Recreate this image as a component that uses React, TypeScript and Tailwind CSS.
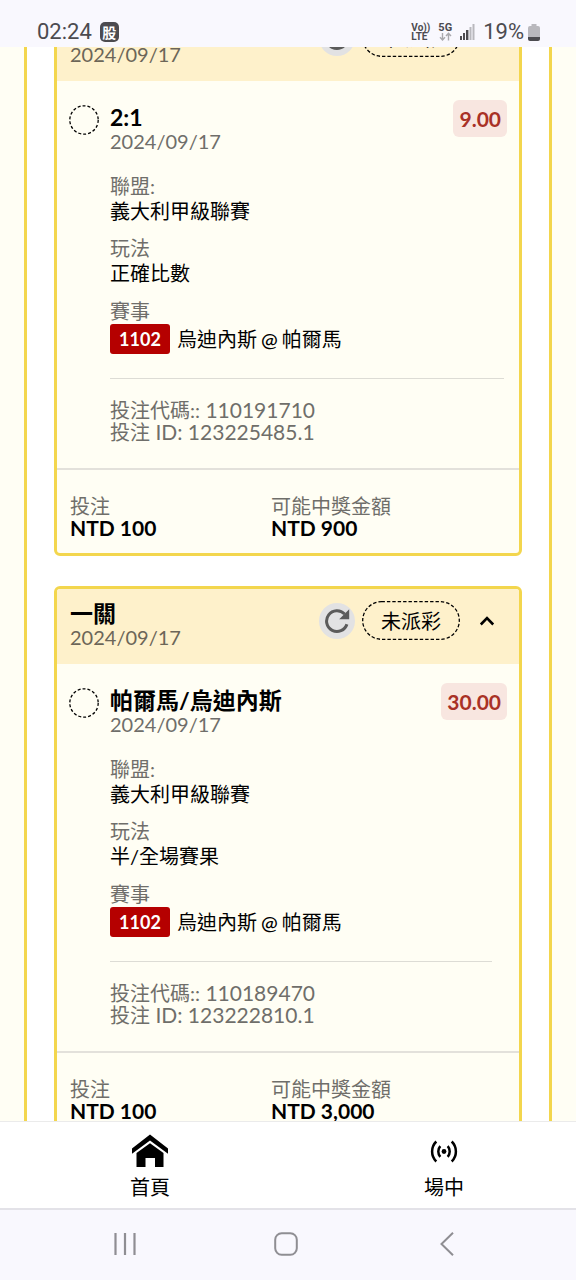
type Bet = {
  id: string;
  code: string;
  title: string;
  date: string;
  odds: string;
  league: string;
  market: string;
  matchNo: string;
  away: string;
  home: string;
  stake: string;
  payout: string;
};

const bets: Bet[] = [
  {
    id: "123225485.1",
    code: "110191710",
    title: "2:1",
    date: "2024/09/17",
    odds: "9.00",
    league: "義大利甲級聯賽",
    market: "正確比數",
    matchNo: "1102",
    away: "烏迪內斯",
    home: "帕爾馬",
    stake: "NTD 100",
    payout: "NTD 900",
  },
  {
    id: "123222810.1",
    code: "110189470",
    title: "帕爾馬/烏迪內斯",
    date: "2024/09/17",
    odds: "30.00",
    league: "義大利甲級聯賽",
    market: "半/全場賽果",
    matchNo: "1102",
    away: "烏迪內斯",
    home: "帕爾馬",
    stake: "NTD 100",
    payout: "NTD 3,000",
  },
];

const StatusBar = () => (
  <header className="flex h-[47px] shrink-0 items-end justify-between bg-[#f9f8fe] pr-9 pb-[3px] pl-[37px] font-['Roboto',sans-serif] text-[#4c4b50]">
    <div className="flex items-center gap-2">
      <span className="text-[22px] leading-6">02:24</span>
      <span className="flex h-5 w-[19px] items-center justify-center rounded-[5px] bg-[#4c4b50] font-['Noto_Sans_CJK_TC',sans-serif] text-[14px] leading-5 font-bold text-white">
        股
      </span>
    </div>
    <div className="flex items-center">
      <div className="flex flex-col text-[10px] leading-[9px] font-bold">
        <span>Vo))</span>
        <span>LTE</span>
      </div>
      <div className="ml-2 flex flex-col items-center text-[11px] leading-[9px] font-bold">
        <span>5G</span>
        <svg width="13" height="9" viewBox="0 0 13 9" fill="none" stroke="#aaa9ae" strokeWidth="1.4" aria-hidden="true">
          <path d="M3.5 1v7M1 5.3 3.5 8 6 5.3M9.5 8.500V1.500M7 4 9.500 1.300 12 4" />
        </svg>
      </div>
      <svg className="ml-2" width="15" height="16" viewBox="0 0 15 16" aria-hidden="true">
        <g fill="#4c4b50">
          <rect x="0" y="12" width="2" height="4" />
          <rect x="3" y="9" width="2" height="7" />
          <rect x="6" y="6" width="2.400" height="10" />
        </g>
        <g fill="#b9b8bd">
          <rect x="9.500" y="3" width="2" height="13" />
          <rect x="12.500" y="0" width="2" height="16" />
        </g>
      </svg>
      <span className="ml-2 text-[22px] leading-6">19%</span>
      <svg className="ml-1" width="12" height="17" viewBox="0 0 12 17" aria-hidden="true">
        <path d="M3.500 0h5v2H10a2 2 0 0 1 2 2v9H0V4a2 2 0 0 1 2-2h1.500z" fill="#b9b8bd" />
        <path d="M0 13h12v2a2 2 0 0 1-2 2H2a2 2 0 0 1-2-2z" fill="#4c4b50" />
      </svg>
    </div>
  </header>
);

const BetHeader = ({ date }: { date: string }) => (
  <div className="flex justify-between bg-[#fef1cb] pt-3 pr-3 pb-[15px] pl-[13px]">
    <div>
      <h2 className="text-[23px] leading-6 font-bold">一關</h2>
      <p className="text-[20px] leading-6 text-[#6c6658]">{date}</p>
    </div>
    <div className="flex h-[39px] items-center gap-[7px]">
      <button
        type="button"
        aria-label="重新整理"
        className="flex size-9 items-center justify-center rounded-full bg-[#e2e2e3]"
      >
        <svg width="26" height="26" viewBox="0 0 26 26" aria-hidden="true">
          <path
            d="M22.900 16.200A10.400 10.400 0 1 1 20.600 6"
            fill="none"
            stroke="#5b5b5b"
            strokeWidth="3"
          />
          <path d="M25.200 1.300v10H15.200z" fill="#5b5b5b" />
        </svg>
      </button>
      <div className="relative flex h-[39px] w-[98px] items-center justify-center">
        <svg className="absolute inset-0" width="98" height="39" viewBox="0 0 98 39" aria-hidden="true">
          <rect
            x="0.700"
            y="0.700"
            width="96.600"
            height="37.600"
            rx="18.800"
            fill="none"
            stroke="#000"
            strokeWidth="1.300"
            strokeDasharray="3.400 2"
          />
        </svg>
        <span className="text-[20px] leading-6">未派彩</span>
      </div>
      <button type="button" aria-label="收合" className="flex h-9 w-10 items-center justify-center">
        <svg width="16" height="10" viewBox="0 0 16 10" aria-hidden="true">
          <path d="M1.800 8.500 8 2.200l6.200 6.300" fill="none" stroke="#000" strokeWidth="2.600" />
        </svg>
      </button>
    </div>
  </div>
);

const Field = ({ label, value }: { label: string; value: string }) => (
  <div className="mb-3 leading-[25px]">
    <dt className="text-[#6f6e6a]">{label}</dt>
    <dd>{value}</dd>
  </div>
);

const BetCard = ({ bet }: { bet: Bet }) => (
  <article className="overflow-hidden rounded-[6px] border-3 border-[#f3d64d] bg-[#fffef4]">
    <BetHeader date={bet.date} />
    <div className="flex items-start px-3 pt-[19px] pb-[25px]">
      <svg className="mt-[5px] mr-[11px] shrink-0" width="30" height="30" viewBox="0 0 30 30" aria-hidden="true">
        <circle cx="15" cy="15" r="14.200" fill="none" stroke="#000" strokeWidth="1.300" strokeDasharray="3 2" />
      </svg>
      <div className="min-w-0 flex-1 pt-[5px]">
        <h3 className="text-[23px] leading-6 font-bold">{bet.title}</h3>
        <p className="text-[20px] leading-[25px] text-[#6f6e6a]">{bet.date}</p>
        <dl className="mt-5">
          <Field label="聯盟:" value={bet.league} />
          <Field label="玩法" value={bet.market} />
          <div>
            <dt className="leading-[26px] text-[#6f6e6a]">賽事</dt>
            <dd className="flex items-center gap-[7px] whitespace-nowrap">
              <span className="flex h-[30px] w-[60px] items-center justify-center rounded-[3px] bg-[#b50000] text-[18px] font-bold text-white">
                {bet.matchNo}
              </span>
              <span className="flex gap-1">
                <span>{bet.away}</span>
                <span className="font-medium">@</span>
                <span>{bet.home}</span>
              </span>
            </dd>
          </div>
        </dl>
        {/* rule runs under the odds badge */}
        <hr className="mt-6 -mr-[51px] border-t border-[#dddcd5]" />
        <div className="mt-5 text-[21px] leading-[22px] text-[#6f6e6a]">
          <p>
            <span className="text-[20px]">投注代碼::</span> {bet.code}
          </p>
          <p>
            <span className="text-[20px]">投注</span> ID: {bet.id}
          </p>
        </div>
      </div>
      <strong className="flex h-[37px] items-center rounded-[6px] bg-[#f8e6e0] px-[6px] text-[21px] font-bold text-[#a93126]">
        {bet.odds}
      </strong>
    </div>
    <dl className="flex border-t-2 border-[#e3e1db] pt-[25px] pr-3 pb-[14px] pl-[13px] leading-[22px]">
      <div className="w-[46%]">
        <dt className="text-[#6f6e6a]">投注</dt>
        <dd className="text-[21px] font-bold">{bet.stake}</dd>
      </div>
      <div>
        <dt className="text-[#6f6e6a]">可能中獎金額</dt>
        <dd className="text-[21px] font-bold">{bet.payout}</dd>
      </div>
    </dl>
  </article>
);

const TabBar = () => (
  <nav className="flex h-[87px] shrink-0 justify-between border-t border-[#ebebeb] bg-white pr-28 pl-[130px]">
    <a href="#home" className="flex flex-col items-center pt-3">
      <svg width="36" height="34" viewBox="0 0 36 34" aria-hidden="true">
        <path d="M0 14.500 18 .5l18 14v5.200L18 6.500 0 19.700z" />
        <path d="M18 9.300 31.500 19v14H23v-9h-9.500v9h-9V19z" />
      </svg>
      <span className="mt-[7px] leading-6">首頁</span>
    </a>
    <a href="#live" className="flex flex-col items-center pt-3">
      <svg width="28" height="34" viewBox="0 0 28 34" fill="none" stroke="#000" strokeWidth="2.500" aria-hidden="true">
        <circle cx="14" cy="17.500" r="2.400" fill="#000" stroke="none" />
        <path d="M10.300 12.200a8 8 0 0 0 0 10.600M17.700 12.200a8 8 0 0 1 0 10.600M6.300 7.500a14 14 0 0 0 0 20M21.700 7.500a14 14 0 0 1 0 20" />
      </svg>
      <span className="mt-[7px] leading-6">場中</span>
    </a>
  </nav>
);

const SystemBar = () => (
  <div className="flex h-[72px] shrink-0 items-center justify-between border-t-2 border-[#e3e2e8] bg-[#f9f8fe] pr-[117px] pb-0.5 pl-[113px]">
    <button type="button" aria-label="Recents">
      <svg width="24" height="24" viewBox="0 0 24 24" stroke="#8f8e93" strokeWidth="2.200" aria-hidden="true">
        <path d="M2.500 1v22M12 1v22M21.500 1v22" />
      </svg>
    </button>
    <button type="button" aria-label="Home">
      <svg width="24" height="24" viewBox="0 0 24 24" fill="none" stroke="#8f8e93" strokeWidth="2" aria-hidden="true">
        <rect x="1.200" y="1.200" width="21.600" height="21.600" rx="6.500" />
      </svg>
    </button>
    <button type="button" aria-label="Back">
      <svg width="24" height="24" viewBox="0 0 24 24" fill="none" stroke="#8f8e93" strokeWidth="2" aria-hidden="true">
        <path d="M18 .8 6.500 12 18 23.200" />
      </svg>
    </button>
  </div>
);

const App: React.FC = () => {
  return (
    <div className="flex h-screen flex-col overflow-hidden bg-white font-['Lato','Noto_Sans_CJK_TC',sans-serif] text-[20px] text-black">
      <StatusBar />
      <main className="min-h-0 flex-1 overflow-hidden bg-[#fffef4] px-6">
        <div className="-mt-11 flex flex-col gap-[30px] border-x-3 border-[#f3d64d] bg-white px-[27px]">
          {bets.map((bet) => (
            <BetCard key={bet.id} bet={bet} />
          ))}
        </div>
      </main>
      <TabBar />
      <SystemBar />
    </div>
  );
};

export default App;
